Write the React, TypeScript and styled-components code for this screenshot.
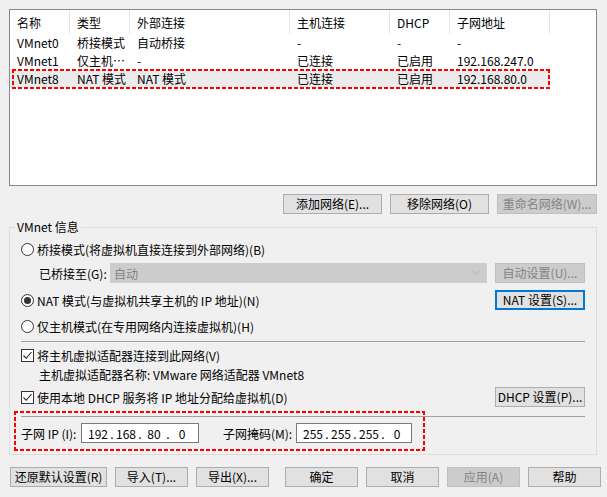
import React from 'react';
import styled, { createGlobalStyle, css } from 'styled-components';
import { ChevronDown } from 'lucide-react';

const GlobalStyle = createGlobalStyle`
  html, body {
    margin: 0;
    padding: 0;
    background: #f0f0f0;
  }
  body {
    font-family: "Noto Sans CJK SC", "Noto Sans", sans-serif;
    font-size: 12px;
    color: #000;
  }
  * {
    box-sizing: border-box;
  }
`;

const COLS = '60px 60px 160px 100px 60px 100px';

const Dialog = styled.div`
  width: 607px;
  height: 497px;
  background: #f0f0f0;
  padding: 9px 10px 0 9px;
  display: flex;
  flex-direction: column;
`;

const ListBox = styled.div`
  height: 177px;
  border: 1px solid #828790;
  background: #fff;
`;

const HeaderRow = styled.div`
  display: grid;
  grid-template-columns: ${COLS};
  height: 24px;
`;

const HeaderCell = styled.div`
  display: flex;
  align-items: center;
  padding-left: 7px;
  border-right: 1px solid #e5e5e5;
  white-space: nowrap;
`;

const Row = styled.div<{ $selected?: boolean }>`
  position: relative;
  display: grid;
  grid-template-columns: ${COLS};
  width: 540px;
  height: 18px;
  background: ${(p) => (p.$selected ? '#ebebeb' : 'transparent')};
`;

const Cell = styled.div`
  padding: 0 2px 0 7px;
  line-height: 18px;
  white-space: nowrap;
`;

const DashedBox = styled.span<{ $left: number; $top: number; $w: number; $h: number }>`
  position: absolute;
  left: ${(p) => p.$left}px;
  top: ${(p) => p.$top}px;
  width: ${(p) => p.$w}px;
  height: ${(p) => p.$h}px;
  pointer-events: none;
  background:
    linear-gradient(90deg, #f00 4px, transparent 4px) top left / 6px 2px repeat-x,
    linear-gradient(90deg, #f00 4px, transparent 4px) bottom left / 6px 2px repeat-x,
    linear-gradient(180deg, #f00 4px, transparent 4px) top left / 2px 6px repeat-y,
    linear-gradient(180deg, #f00 4px, transparent 4px) top right / 2px 6px repeat-y;
`;

const ButtonRow = styled.div<{ $mt: number }>`
  display: flex;
  justify-content: flex-end;
  gap: 8px;
  margin-top: ${(p) => p.$mt}px;
`;

const Button = styled.button<{ $w: number; $focused?: boolean }>`
  width: ${(p) => p.$w}px;
  height: 20px;
  padding: 0;
  flex: none;
  font: inherit;
  font-size: 12px;
  line-height: 16px;
  color: #000;
  background: #e1e1e1;
  border: 1px solid #adadad;
  white-space: nowrap;

  &:disabled {
    background: #cccccc;
    border-color: #bfbfbf;
    color: #838383;
  }

  ${(p) =>
    p.$focused &&
    css`
      border: 2px solid #0078d7;
    `}
`;

const Group = styled.fieldset`
  margin: 5px 0 0 0;
  padding: 0;
  min-width: 0;
  border: 1px solid #dcdcdc;
`;

const Legend = styled.legend`
  margin-left: 5px;
  padding: 0 2px;
  line-height: 16px;
`;

const GroupBody = styled.div`
  display: flex;
  flex-direction: column;
  padding: 5px 11px 11px 11px;
`;

const OptionRow = styled.div<{ $h?: number; $mt?: number; $indent?: number }>`
  position: relative;
  display: flex;
  align-items: center;
  height: ${(p) => p.$h ?? 18}px;
  margin-top: ${(p) => p.$mt ?? 0}px;
  padding-left: ${(p) => p.$indent ?? 0}px;
  white-space: nowrap;
`;

const Spacer = styled.div`
  flex: 1;
`;

const RadioCircle = styled.span<{ $checked?: boolean }>`
  position: relative;
  flex: none;
  width: 13px;
  height: 13px;
  margin-right: 3px;
  border-radius: 50%;
  border: 1px solid #333;
  background: #fff;

  ${(p) =>
    p.$checked &&
    css`
      &::after {
        content: '';
        position: absolute;
        inset: 2px;
        border-radius: 50%;
        background: #333;
      }
    `}
`;

const CheckSquare = styled.span`
  display: flex;
  align-items: center;
  justify-content: center;
  flex: none;
  width: 13px;
  height: 13px;
  margin-right: 3px;
  border: 1px solid #333;
  background: #fff;
`;

const Label = styled.span<{ $w?: number; $ml?: number }>`
  display: inline-block;
  flex: none;
  width: ${(p) => (p.$w ? `${p.$w}px` : 'auto')};
  margin-left: ${(p) => p.$ml ?? 0}px;
`;

const Select = styled.div`
  display: flex;
  align-items: center;
  justify-content: space-between;
  width: 377px;
  height: 20px;
  margin-right: 8px;
  padding: 0 4px 0 3px;
  background: #cccccc;
  border: 1px solid #cccccc;
  color: #838383;
`;

const Separator = styled.div<{ $mt: number }>`
  height: 1px;
  margin-top: ${(p) => p.$mt}px;
  background: #a0a0a0;
`;

const IpField = styled.div<{ $w: number }>`
  display: flex;
  align-items: center;
  width: ${(p) => p.$w}px;
  height: 20px;
  padding-left: 4px;
  background: #fff;
  border: 1px solid #7a7a7a;
`;

const IpSegment = styled.span`
  width: 24px;
  text-align: center;
`;

const IpDot = styled.span`
  width: 4px;
  text-align: center;
`;

const BottomBar = styled.div`
  display: flex;
  margin-top: 12px;
  padding-left: 1px;
  gap: 8px;
`;

const Radio: React.FC<{ checked?: boolean; children: React.ReactNode }> = ({ checked, children }) => (
  <>
    <RadioCircle $checked={checked} />
    <Label>{children}</Label>
  </>
);

const Check: React.FC<{ children: React.ReactNode }> = ({ children }) => (
  <>
    <CheckSquare>
      <svg width="11" height="11" viewBox="0 0 11 11">
        <polyline points="1.5,5.5 4.2,8.3 9.5,2" fill="none" stroke="#222" strokeWidth="1.1" />
      </svg>
    </CheckSquare>
    <Label>{children}</Label>
  </>
);

const Ip: React.FC<{ parts: string[]; w: number }> = ({ parts, w }) => (
  <IpField $w={w}>
    {parts.map((p, i) => (
      <React.Fragment key={i}>
        {i > 0 && <IpDot>.</IpDot>}
        <IpSegment>{p}</IpSegment>
      </React.Fragment>
    ))}
  </IpField>
);

const headers = ['名称', '类型', '外部连接', '主机连接', 'DHCP', '子网地址'];

const rows = [
  ['VMnet0', '桥接模式', '自动桥接', '-', '-', '-'],
  ['VMnet1', '仅主机…', '-', '已连接', '已启用', '192.168.247.0'],
  ['VMnet8', 'NAT 模式', 'NAT 模式', '已连接', '已启用', '192.168.80.0'],
];

const App: React.FC = () => {
  return (
    <>
      <GlobalStyle />
      <Dialog>
        <ListBox>
          <HeaderRow>
            {headers.map((h) => (
              <HeaderCell key={h}>{h}</HeaderCell>
            ))}
          </HeaderRow>
          {rows.map((r, i) => {
            const selected = i === 2;
            return (
              <Row key={r[0]} $selected={selected}>
                {r.map((c, j) => (
                  <Cell key={j}>{c}</Cell>
                ))}
                {selected && <DashedBox $left={2} $top={-1} $w={538} $h={20} />}
              </Row>
            );
          })}
        </ListBox>

        <ButtonRow $mt={8}>
          <Button $w={99}>添加网络(E)...</Button>
          <Button $w={99}>移除网络(O)</Button>
          <Button $w={100} disabled>
            重命名网络(W)...
          </Button>
        </ButtonRow>

        <Group>
          <Legend>VMnet 信息</Legend>
          <GroupBody>
            <OptionRow>
              <Radio>桥接模式(将虚拟机直接连接到外部网络)(B)</Radio>
            </OptionRow>
            <OptionRow $h={20} $mt={5} $indent={18}>
              <Label $w={71}>已桥接至(G):</Label>
              <Select>
                <span>自动</span>
                <ChevronDown size={12} color="#a8a8a8" strokeWidth={1.5} />
              </Select>
              <Button $w={90} disabled>
                自动设置(U)...
              </Button>
            </OptionRow>
            <OptionRow $h={20} $mt={7}>
              <Radio checked>NAT 模式(与虚拟机共享主机的 IP 地址)(N)</Radio>
              <Spacer />
              <Button $w={90} $focused>
                NAT 设置(S)...
              </Button>
            </OptionRow>
            <OptionRow $mt={7}>
              <Radio>仅主机模式(在专用网络内连接虚拟机)(H)</Radio>
            </OptionRow>

            <Separator $mt={6} />

            <OptionRow $mt={4}>
              <Check>将主机虚拟适配器连接到此网络(V)</Check>
            </OptionRow>
            <OptionRow $mt={1} $indent={18}>
              <Label>主机虚拟适配器名称: VMware 网络适配器 VMnet8</Label>
            </OptionRow>
            <OptionRow $h={20} $mt={4}>
              <Check>使用本地 DHCP 服务将 IP 地址分配给虚拟机(D)</Check>
              <Spacer />
              <Button $w={90}>DHCP 设置(P)...</Button>
            </OptionRow>

            <Separator $mt={9} />

            <OptionRow $h={20} $mt={6}>
              <Label $w={60}>子网 IP (I):</Label>
              <Ip parts={['192', '168', '80', '0']} w={118} />
              <Label $w={73} $ml={24}>
                子网掩码(M):
              </Label>
              <Ip parts={['255', '255', '255', '0']} w={116} />
              <DashedBox $left={-7} $top={-12} $w={411} $h={40} />
            </OptionRow>
          </GroupBody>
        </Group>

        <BottomBar>
          <Button $w={97}>还原默认设置(R)</Button>
          <Button $w={73}>导入(T)...</Button>
          <Button $w={73}>导出(X)...</Button>
          <Spacer />
          <Button $w={73}>确定</Button>
          <Button $w={73}>取消</Button>
          <Button $w={73} disabled>
            应用(A)
          </Button>
          <Button $w={73}>帮助</Button>
        </BottomBar>
      </Dialog>
    </>
  );
};

export default App;
